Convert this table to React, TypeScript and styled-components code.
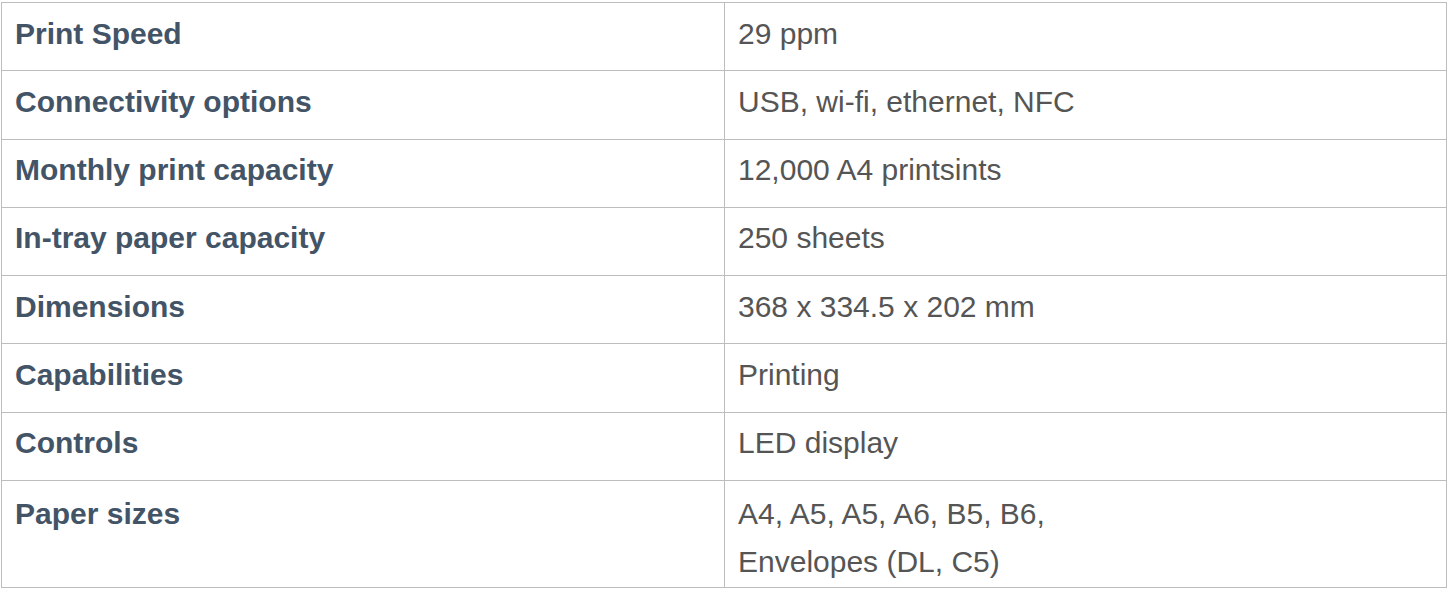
import React from 'react';
import styled, { createGlobalStyle } from 'styled-components';

const GlobalStyle = createGlobalStyle`
  html, body {
    margin: 0;
    padding: 0;
    background: #ffffff;
  }
  body {
    font-family: "Liberation Sans", Arial, Helvetica, sans-serif;
  }
`;

const SpecTable = styled.div`
  width: 1446px;
  margin: 2px 0 0 1px;
  border: 1px solid #bdbdbd;
  border-bottom: none;
  box-sizing: border-box;
  display: flex;
  flex-direction: column;
`;

const Row = styled.div`
  display: grid;
  grid-template-columns: 723px 1fr;
  border-bottom: 1px solid #bdbdbd;
`;

const Cell = styled.div<{ $multiline?: boolean }>`
  padding: ${({ $multiline }) => ($multiline ? '9px 13px 2px' : '6.5px 13px 13.3px')};
  font-size: 30px;
  line-height: 47.5px;
`;

const Label = styled(Cell)`
  font-weight: 700;
  color: #435467;
  border-right: 1px solid #bdbdbd;
`;

const Value = styled(Cell)`
  color: #555555;
`;

type Spec = { label: string; value: string[] };

const specs: Spec[] = [
  { label: 'Print Speed', value: ['29 ppm'] },
  { label: 'Connectivity options', value: ['USB, wi-fi, ethernet, NFC'] },
  { label: 'Monthly print capacity', value: ['12,000 A4 printsints'] },
  { label: 'In-tray paper capacity', value: ['250 sheets'] },
  { label: 'Dimensions', value: ['368 x 334.5 x 202 mm'] },
  { label: 'Capabilities', value: ['Printing'] },
  { label: 'Controls', value: ['LED display'] },
  { label: 'Paper sizes', value: ['A4, A5, A5, A6, B5, B6,', 'Envelopes (DL, C5)'] },
];

export default function App() {
  return (
    <>
      <GlobalStyle />
      <SpecTable>
        {specs.map((spec) => {
          const multi = spec.value.length > 1;
          return (
            <Row key={spec.label}>
              <Label $multiline={multi}>{spec.label}</Label>
              <Value $multiline={multi}>
                {spec.value.map((line, i) => (
                  <React.Fragment key={line}>
                    {i > 0 && <br />}
                    {line}
                  </React.Fragment>
                ))}
              </Value>
            </Row>
          );
        })}
      </SpecTable>
    </>
  );
}
